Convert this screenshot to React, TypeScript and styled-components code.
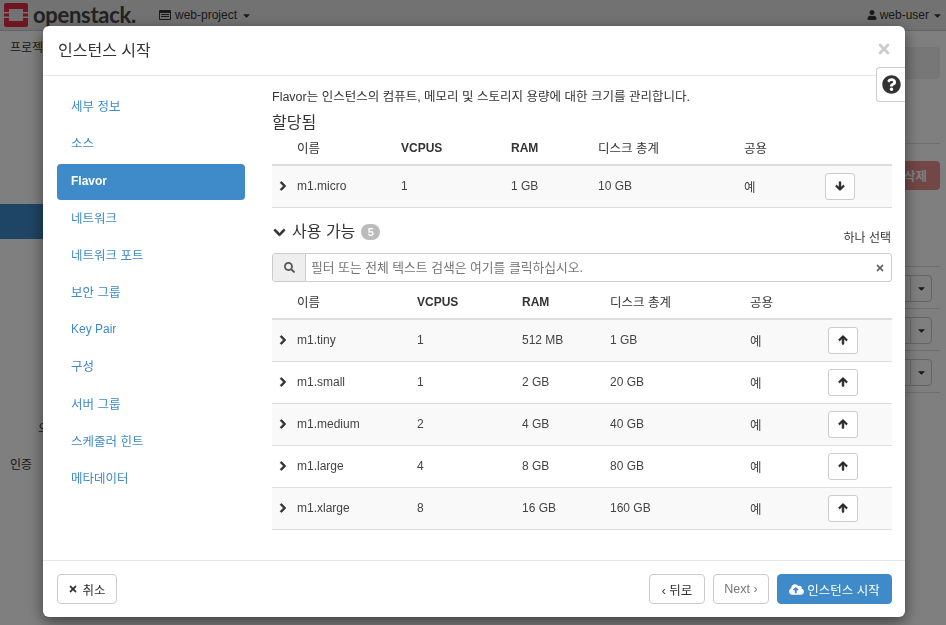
import { createGlobalStyle, styled } from 'styled-components';
import {
  FaArrowDown,
  FaArrowUp,
  FaCaretDown,
  FaChevronDown,
  FaChevronRight,
  FaCloudUploadAlt,
  FaQuestionCircle,
  FaSearch,
  FaTimes,
  FaUser,
} from 'react-icons/fa';

const FONT = '"Liberation Sans", "Noto Sans CJK KR", sans-serif';

const GlobalStyle = createGlobalStyle`
  html, body {
    margin: 0;
    padding: 0;
    height: 100%;
    overflow: hidden;
    background: #fff;
    font-family: ${FONT};
    font-size: 12px;
    color: #333;
  }
  * { box-sizing: border-box; }
`;

const steps = [
  '세부 정보',
  '소스',
  'Flavor',
  '네트워크',
  '네트워크 포트',
  '보안 그룹',
  'Key Pair',
  '구성',
  '서버 그룹',
  '스케줄러 힌트',
  '메타데이터',
];

const allocated = [{ name: 'm1.micro', vcpus: '1', ram: '1 GB', disk: '10 GB' }];

const available = [
  { name: 'm1.tiny', vcpus: '1', ram: '512 MB', disk: '1 GB' },
  { name: 'm1.small', vcpus: '1', ram: '2 GB', disk: '20 GB' },
  { name: 'm1.medium', vcpus: '2', ram: '4 GB', disk: '40 GB' },
  { name: 'm1.large', vcpus: '4', ram: '8 GB', disk: '80 GB' },
  { name: 'm1.xlarge', vcpus: '8', ram: '16 GB', disk: '160 GB' },
];

const ALLOCATED_COLS = '25px 104px 110px 87px 146px 81px 1fr';
const AVAILABLE_COLS = '25px 120px 105px 88px 140px 78px 1fr';

function Logo() {
  return (
    <svg width="24" height="24" viewBox="0 0 24 24">
      <path
        fill="#e02a45"
        fillRule="evenodd"
        d="M2 0h20a2 2 0 0 1 2 2v7h-5V6H5v3H0V2a2 2 0 0 1 2-2zM0 10.5h5v3H0zM19 10.5h5v3h-5zM0 15h5v3h14v-3h5v7a2 2 0 0 1-2 2H2a2 2 0 0 1-2-2z"
      />
    </svg>
  );
}

function ProjectIcon() {
  return (
    <svg width="12" height="10" viewBox="0 0 12 10">
      <path
        fill="#333"
        fillRule="evenodd"
        d="M1 0h10a1 1 0 0 1 1 1v8a1 1 0 0 1-1 1H1a1 1 0 0 1-1-1V1a1 1 0 0 1 1-1zM1 3v6h10V3zM2 4h8v1H2zM2 6h8v1H2z"
      />
    </svg>
  );
}

function FlavorTable({ cols, rows, down }: { cols: string; rows: typeof available; down?: boolean }) {
  return (
    <div>
      <HeadRow $cols={cols}>
        <span />
        <span>이름</span>
        <strong>VCPUS</strong>
        <strong>RAM</strong>
        <span>디스크 총계</span>
        <span>공용</span>
      </HeadRow>
      {rows.map((row) => (
        <BodyRow key={row.name} $cols={cols}>
          <RowChevron>
            <FaChevronRight size={10} stroke="currentColor" strokeWidth={50} />
          </RowChevron>
          <span>{row.name}</span>
          <span>{row.vcpus}</span>
          <span>{row.ram}</span>
          <span>{row.disk}</span>
          <KoCell>예</KoCell>
          <MoveButton type="button">
            {down ? (
              <FaArrowDown size={10} stroke="currentColor" strokeWidth={40} />
            ) : (
              <FaArrowUp size={10} stroke="currentColor" strokeWidth={40} />
            )}
          </MoveButton>
        </BodyRow>
      ))}
    </div>
  );
}

function SplitAction() {
  return (
    <ActionRow>
      <ActionButton>
        <ActionCaret><FaCaretDown size={11} /></ActionCaret>
      </ActionButton>
    </ActionRow>
  );
}

export default function App() {
  return (
    <>
      <GlobalStyle />
      <Page>
        <TopBar>
          <Brand>
            <Logo />
            <BrandName>openstack.</BrandName>
          </Brand>
          <ProjectMenu>
            <ProjectIcon />
            web-project
            <FaCaretDown size={11} />
          </ProjectMenu>
          <UserMenu>
            <FaUser size={10} />
            web-user
            <FaCaretDown size={11} />
          </UserMenu>
        </TopBar>
        <Underlay>
          <SideColumn>
            <Crumb>프로젝트</Crumb>
            <ActiveBar />
            <SideNote>오</SideNote>
            <SideLabel>인증</SideLabel>
          </SideColumn>
          <RightColumn>
            <InfoBox />
            <Rule />
            <DeleteRow>
              <DeleteButton type="button">삭제</DeleteButton>
            </DeleteRow>
            <SplitAction />
            <SplitAction />
            <SplitAction />
            <Rule />
          </RightColumn>
        </Underlay>
      </Page>
      <Backdrop />
      <Modal>
        <Header>
          <Title>인스턴스 시작</Title>
          <CloseButton type="button"><FaTimes size={16} /></CloseButton>
        </Header>
        <HelpButton type="button"><FaQuestionCircle size={19} /></HelpButton>
        <Content>
          <Steps>
            {steps.map((step) => (
              <Step key={step} $active={step === 'Flavor'} $latin={/^[A-Za-z ]+$/.test(step)}>
                {step}
              </Step>
            ))}
          </Steps>
          <Main>
            <Intro>Flavor는 인스턴스의 컴퓨트, 메모리 및 스토리지 용량에 대한 크기를 관리합니다.</Intro>
            <SectionTitle>할당됨</SectionTitle>
            <FlavorTable cols={ALLOCATED_COLS} rows={allocated} down />
            <AvailableHead>
              <AvailableTitle>
                <FaChevronDown size={13} color="#333" stroke="currentColor" strokeWidth={30} />
                사용 가능
                <Badge>5</Badge>
              </AvailableTitle>
              <SelectHint>하나 선택</SelectHint>
            </AvailableHead>
            <SearchBar>
              <SearchAddon><FaSearch size={11} /></SearchAddon>
              <SearchInput placeholder="필터 또는 전체 텍스트 검색은 여기를 클릭하십시오." readOnly />
              <ClearIcon><FaTimes size={10} /></ClearIcon>
            </SearchBar>
            <FlavorTable cols={AVAILABLE_COLS} rows={available} />
          </Main>
        </Content>
        <Footer>
          <FooterButton type="button" $width={60}>
            <FaTimes size={10} />
            취소
          </FooterButton>
          <FooterRight>
            <FooterButton type="button" $width={56}>‹ 뒤로</FooterButton>
            <FooterButton type="button" $width={56} $muted>Next ›</FooterButton>
            <PrimaryButton type="button">
              <FaCloudUploadAlt size={15} />
              인스턴스 시작
            </PrimaryButton>
          </FooterRight>
        </Footer>
      </Modal>
    </>
  );
}

const Page = styled.div`
  width: 946px;
  height: 625px;
  background: #fff;
  overflow: hidden;
`;

const TopBar = styled.header`
  display: flex;
  align-items: center;
  height: 31px;
  padding: 0 3px 0 4px;
  background: #e4e4e4;
  border-bottom: 1px solid #c8c8c8;
  font-size: 12px;
`;

const Brand = styled.div`
  display: flex;
  align-items: center;
  gap: 5px;
  width: 155px;
`;

const BrandName = styled.span`
  font-family: Lato, sans-serif;
  font-size: 22px;
  font-weight: 700;
  letter-spacing: -0.3px;
  line-height: 28px;
  color: #444;
`;

const ProjectMenu = styled.div`
  display: flex;
  align-items: center;
  gap: 4px;
`;

const UserMenu = styled.div`
  display: flex;
  align-items: center;
  gap: 3px;
  margin-left: auto;
`;

const Underlay = styled.div`
  display: flex;
  justify-content: space-between;
  height: 594px;
`;

const SideColumn = styled.div`
  width: 100px;
`;

const Crumb = styled.div`
  margin: 8px 0 0 10px;
  line-height: 18px;
`;

const ActiveBar = styled.div`
  height: 35px;
  margin-top: 147px;
  background: #3f8ac9;
`;

const SideNote = styled.div`
  margin: 181px 0 0 38px;
  line-height: 18px;
`;

const SideLabel = styled.div`
  margin: 18px 0 0 10px;
  line-height: 18px;
`;

const RightColumn = styled.div`
  width: 90px;
  padding: 16px 6px 0 0;
`;

const InfoBox = styled.div`
  height: 32px;
  background: #eee;
  border-radius: 4px;
`;

const Rule = styled.div`
  height: 1px;
  margin-top: 64px;
  background: #ddd;
  &:last-child { margin-top: 0; }
`;

const DeleteRow = styled.div`
  display: flex;
  justify-content: flex-end;
  margin: 17px 0 76px;
`;

const DeleteButton = styled.button`
  width: 70px;
  height: 29px;
  padding: 0 13px;
  border: 0;
  border-radius: 4px;
  background: #d9534f;
  color: #fff;
  font: bold 12.5px ${FONT};
  text-align: right;
  opacity: 0.65;
`;

const ActionRow = styled.div`
  display: flex;
  justify-content: flex-end;
  height: 42px;
  padding: 8px 8px 6px 0;
  border-top: 1px solid #ddd;
`;

const ActionButton = styled.div`
  display: flex;
  justify-content: flex-end;
  width: 40px;
  border: 1px solid #ccc;
  border-radius: 4px;
`;

const ActionCaret = styled.div`
  display: flex;
  align-items: center;
  justify-content: center;
  width: 21px;
  border-left: 1px solid #ccc;
  color: #333;
`;

const Backdrop = styled.div`
  position: fixed;
  inset: 0;
  background: rgba(0, 0, 0, 0.5);
`;

const Modal = styled.div`
  position: fixed;
  left: 43px;
  top: 26px;
  display: flex;
  flex-direction: column;
  width: 862px;
  height: 591px;
  background: #fff;
  border-radius: 6px;
  box-shadow: 0 5px 15px rgba(0, 0, 0, 0.5);
`;

const Header = styled.div`
  display: flex;
  align-items: center;
  justify-content: space-between;
  height: 50px;
  padding: 0 13px 3px 15px;
  border-bottom: 1px solid #e5e5e5;
`;

const Title = styled.h4`
  margin: 0;
  font-size: 16px;
  font-weight: 400;
  color: #333;
`;

const CloseButton = styled.button`
  display: flex;
  padding: 0;
  border: 0;
  background: none;
  color: #ccc;
`;

const HelpButton = styled.button`
  position: absolute;
  top: 41px;
  right: 0;
  display: flex;
  align-items: center;
  justify-content: center;
  width: 29px;
  height: 35px;
  padding: 0;
  background: #fff;
  border: 1px solid #ccc;
  border-right: 0;
  border-radius: 4px 0 0 4px;
  color: #333;
`;

const Content = styled.div`
  display: flex;
  flex: 1;
  min-height: 0;
  padding: 12px 13px 0 14px;
`;

const Steps = styled.nav`
  display: flex;
  flex-direction: column;
  gap: 2px;
  width: 188px;
  margin-right: 27px;
`;

const Step = styled.a<{ $active?: boolean; $latin?: boolean }>`
  display: flex;
  align-items: center;
  height: 35.2px;
  padding: 0 14px;
  border-radius: 4px;
  font-size: ${(props) => (props.$latin ? '12px' : '12.5px')};
  font-weight: ${(props) => (props.$active ? 700 : 400)};
  color: ${(props) => (props.$active ? '#fff' : '#3f8ac9')};
  background: ${(props) => (props.$active ? '#3f8ac9' : 'transparent')};
  ${(props) => props.$active && 'margin: 2px 0 -2px; padding-bottom: 1px;'}
`;

const Main = styled.div`
  flex: 1;
  min-width: 0;
`;

const Intro = styled.p`
  margin: 0;
  font-size: 12.5px;
  line-height: 18px;
`;

const SectionTitle = styled.h5`
  height: 17px;
  margin: 8px 0 0;
  font-size: 16px;
  font-weight: 400;
  line-height: 18px;
`;

const HeadRow = styled.div<{ $cols: string }>`
  display: grid;
  grid-template-columns: ${(props) => props.$cols};
  align-items: center;
  height: 35px;
  border-bottom: 2px solid #ddd;
  font-size: 12.5px;
  strong { font-size: 12px; font-weight: 700; }
`;

const BodyRow = styled.div<{ $cols: string }>`
  display: grid;
  grid-template-columns: ${(props) => props.$cols};
  align-items: center;
  height: 42px;
  padding-bottom: 1px;
  border-bottom: 1px solid #ddd;
  color: #444;
  &:nth-child(even) { background: #f9f9f9; }
`;

const RowChevron = styled.span`
  display: flex;
  padding-left: 6px;
  color: #333;
`;

const KoCell = styled.span`
  font-size: 12.5px;
`;

const MoveButton = styled.button`
  display: flex;
  align-items: center;
  justify-content: center;
  width: 30px;
  height: 27px;
  padding: 0;
  background: #fff;
  border: 1px solid #ccc;
  border-radius: 3px;
  color: #222;
`;

const AvailableHead = styled.div`
  display: flex;
  align-items: flex-start;
  justify-content: space-between;
  height: 45px;
`;

const AvailableTitle = styled.div`
  display: flex;
  align-items: center;
  gap: 6px;
  margin-top: 15px;
  line-height: 18px;
  font-size: 16px;
  svg { margin-left: 1px; }
`;

const Badge = styled.span`
  display: flex;
  align-items: center;
  justify-content: center;
  width: 19px;
  height: 16px;
  border-radius: 8px;
  background: #bbb;
  color: #fff;
  font-size: 11px;
  font-weight: 700;
`;

const SelectHint = styled.span`
  margin: 21px 1px 0 0;
  line-height: 18px;
`;

const SearchBar = styled.div`
  display: flex;
  align-items: center;
  height: 29px;
  margin-bottom: 3px;
  border: 1px solid #ccc;
  border-radius: 3px;
`;

const SearchAddon = styled.div`
  display: flex;
  align-items: center;
  justify-content: center;
  width: 33px;
  height: 100%;
  background: #eee;
  border-right: 1px solid #ccc;
  border-radius: 3px 0 0 3px;
  color: #555;
`;

const SearchInput = styled.input`
  flex: 1;
  min-width: 0;
  padding: 0 5px;
  border: 0;
  outline: 0;
  font: 12.8px ${FONT};
  &::placeholder { color: #777; opacity: 1; }
`;

const ClearIcon = styled.span`
  display: flex;
  margin-right: 6px;
  color: #666;
`;

const Footer = styled.div`
  display: flex;
  align-items: center;
  justify-content: space-between;
  height: 57px;
  padding: 0 13px 0 14px;
  border-top: 1px solid #e5e5e5;
`;

const FooterRight = styled.div`
  display: flex;
  gap: 8px;
`;

const FooterButton = styled.button<{ $muted?: boolean; $width: number }>`
  display: flex;
  align-items: center;
  justify-content: center;
  gap: 4px;
  width: ${(props) => props.$width}px;
  height: 30px;
  padding: 0;
  background: #fff;
  border: 1px solid #ccc;
  border-radius: 4px;
  font: 12.5px ${FONT};
  color: ${(props) => (props.$muted ? '#777' : '#333')};
`;

const PrimaryButton = styled.button`
  display: flex;
  align-items: center;
  justify-content: center;
  gap: 3px;
  width: 115px;
  height: 30px;
  padding: 0;
  background: #3f8ac9;
  border: 1px solid #3f8ac9;
  border-radius: 4px;
  font: 12.5px ${FONT};
  color: #fff;
`;
